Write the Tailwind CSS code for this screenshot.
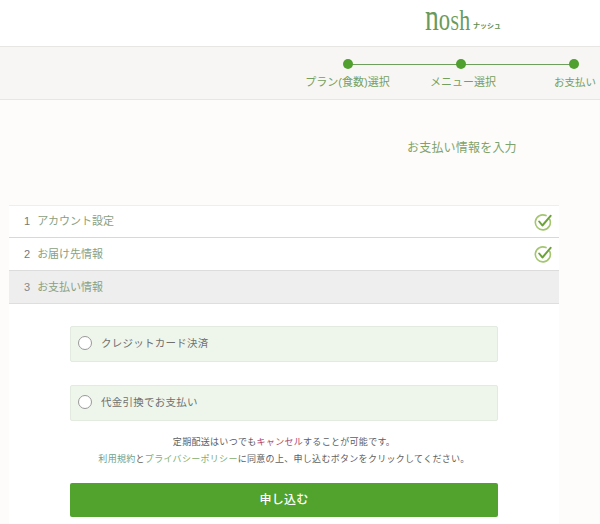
<!DOCTYPE html>
<html lang="ja">
<head>
    <meta charset="UTF-8">
    <title>nosh</title>
    <script src="https://cdn.jsdelivr.net/npm/@tailwindcss/browser@4"></script>
</head>
<body class="w-[600px] h-[524px] overflow-hidden bg-[#fdfcfb] font-['Liberation_Sans','Noto_Sans_CJK_JP',sans-serif] text-[#555]">
    <!-- Header -->
    <header class="h-[47px] bg-white border-b border-[#e8e6e3] flex items-start pl-[425px]">
        <span class="flex items-baseline h-[35px] w-[66px] mr-[-18px] origin-left scale-x-[0.73] font-['Liberation_Serif',serif] text-[#6a9a5a] leading-[35px]">
            <span class="text-[38px]">n</span><span class="text-[31px]">o</span><span class="text-[22px]">S</span><span class="text-[30px]">h</span>
        </span>
        <span class="text-[7px] leading-[8px] mt-[22px] text-[#5f8f50] font-bold">ナッシュ</span>
    </header>

    <!-- Steps -->
    <div class="h-[53px] bg-[#f7f6f4] border-b border-[#e8e6e3] pl-[291px] pt-[12px]">
        <div class="w-[339px] grid grid-cols-3 relative">
            <div class="absolute left-[57px] top-[5px] w-[226px] h-px bg-[#6f9f5c]"></div>
            <div class="flex flex-col items-center relative">
                <span class="w-[10px] h-[10px] rounded-full bg-[#4fa02e]"></span>
                <span class="text-[11px] leading-[14px] mt-[6px] text-[#74a05f] whitespace-nowrap">プラン(食数)選択</span>
            </div>
            <div class="flex flex-col items-center relative">
                <span class="w-[10px] h-[10px] rounded-full bg-[#4fa02e]"></span>
                <span class="text-[11px] leading-[14px] mt-[6px] ml-[5px] text-[#74a05f] whitespace-nowrap">メニュー選択</span>
            </div>
            <div class="flex flex-col items-center relative">
                <span class="w-[10px] h-[10px] rounded-full bg-[#4fa02e]"></span>
                <span class="text-[10.5px] leading-[14px] mt-[6px] ml-[3px] text-[#74a05f] whitespace-nowrap">お支払い</span>
            </div>
        </div>
    </div>

    <h1 class="pl-[407px] pt-[40px] h-[105px] text-[12px] leading-[16px] font-normal tracking-[0.2px] text-[#7da36c]">お支払い情報を入力</h1>

    <!-- Accordion -->
    <div class="ml-[9px] w-[550px] text-[11px]">
        <div class="h-[33px] bg-white border-t border-b border-t-[#eeeeee] border-b-[#d8d8d8] flex items-center justify-between pl-[15px] pr-[7px]">
            <span><span class="text-[#777] mr-[7px]">1</span><span class="text-[#8aa07e]">アカウント設定</span></span>
            <svg class="w-[18px] h-[18px]" viewBox="0 0 18 18" fill="none" stroke-linecap="round" stroke-linejoin="round">
                <path d="M15.8 6.6A7.5 7.5 0 1 1 12 2.6" stroke="#a3c66f" stroke-width="1.6"/>
                <path d="M5.2 8.5 8.4 12.5 16.6 2.8" stroke="#6ba338" stroke-width="2"/>
            </svg>
        </div>
        <div class="h-[33px] bg-white border-b border-b-[#dcdcdc] flex items-center justify-between pl-[15px] pr-[7px]">
            <span><span class="text-[#777] mr-[7px]">2</span><span class="text-[#8aa07e]">お届け先情報</span></span>
            <svg class="w-[18px] h-[18px]" viewBox="0 0 18 18" fill="none" stroke-linecap="round" stroke-linejoin="round">
                <path d="M15.8 6.6A7.5 7.5 0 1 1 12 2.6" stroke="#a3c66f" stroke-width="1.6"/>
                <path d="M5.2 8.5 8.4 12.5 16.6 2.8" stroke="#6ba338" stroke-width="2"/>
            </svg>
        </div>
        <div class="h-[33px] bg-[#eeeeee] border-b border-b-[#dedede] flex items-center pl-[15px]">
            <span class="text-[#888] mr-[7px]">3</span><span class="text-[#8aa07e]">お支払い情報</span>
        </div>

        <!-- Payment panel -->
        <div class="bg-white h-[221px] pt-[22px] px-[61px]">
            <label class="h-[36px] flex items-center gap-[8px] pl-[7px] pb-[3px] bg-[#eef6ec] border border-[#e3ebe1] rounded-[2px]">
                <span class="w-[14px] h-[14px] rounded-full bg-white border border-[#999]"></span>
                <span class="text-[#707070] text-[10.5px] tracking-[0.25px] ml-[1px] mt-[3px]">クレジットカード決済</span>
            </label>
            <label class="h-[36px] mt-[23px] flex items-center gap-[8px] pl-[7px] pb-[3px] bg-[#eef6ec] border border-[#e3ebe1] rounded-[2px]">
                <span class="w-[14px] h-[14px] rounded-full bg-white border border-[#999]"></span>
                <span class="text-[#707070] text-[10.5px] tracking-[0.25px] ml-[1px] mt-[3px]">代金引換でお支払い</span>
            </label>
            <div class="mt-[13px] text-center text-[9px] leading-[17px] tracking-[0.3px] text-[#606060]">
                <p>定期配送はいつでも<span class="text-[#b0496b]">キャンセル</span>することが可能です。</p>
                <p><span class="text-[#6fa28d]">利用規約</span>と<span class="text-[#7fae6b]">プライバシーポリシー</span>に同意の上、申し込むボタンをクリックしてください。</p>
            </div>
            <button class="mt-[15px] w-full h-[34px] bg-[#52a32d] rounded-[2px] text-white text-[12px] font-medium tracking-[0.3px]">申し込む</button>
        </div>
    </div>
</body>
</html>
